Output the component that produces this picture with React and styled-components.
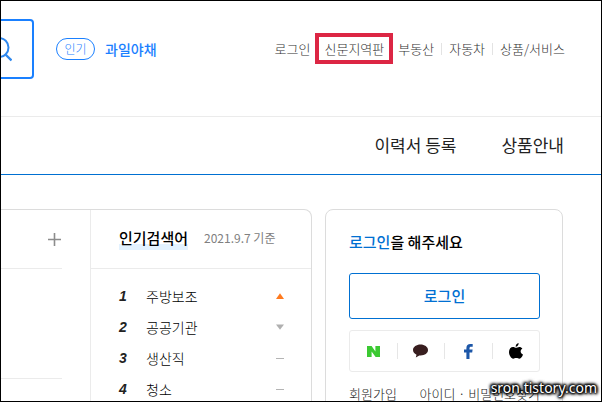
import React from "react";
import styled, { createGlobalStyle } from "styled-components";

const keywords = [
  { name: "주방보조", trend: "up" },
  { name: "공공기관", trend: "down" },
  { name: "생산직", trend: "same" },
  { name: "청소", trend: "same" },
];

const trendLabel = { up: "상승", down: "하락", same: "변동 없음" };

function Trend({ type }) {
  return (
    <svg width="8" height="6" viewBox="0 0 8 6" role="img" aria-label={trendLabel[type]}>
      {type === "up" && <path d="M4 0.3 L8 6 H0 Z" fill="#ff7a1f" />}
      {type === "down" && <path d="M0 0.5 H8 L4 5.8 Z" fill="#b0b0b0" />}
      {type === "same" && <path d="M0 3 H8 V4 H0 Z" fill="#b4b4b4" />}
    </svg>
  );
}

export default function App() {
  return (
    <Page>
      <GlobalStyle />
      <Header>
        <SearchButton type="button" aria-label="검색">
          <svg width="26" height="26" viewBox="0 0 26 26" fill="none" stroke="#2f88ee" strokeWidth="2">
            <circle cx="13" cy="11.5" r="9.5" />
            <path d="M19.5 18.5 L25.5 24.5" strokeWidth="2.4" />
          </svg>
        </SearchButton>
        <Badge>인기</Badge>
        <HotKeyword href="#hot">과일야채</HotKeyword>
        <UtilMenu>
          <UtilLink href="#login">로그인</UtilLink>
          <Marked>
            <UtilLink href="#local">신문지역판</UtilLink>
          </Marked>
          <UtilLink href="#estate">부동산</UtilLink>
          <Bar />
          <UtilLink href="#car">자동차</UtilLink>
          <Bar />
          <UtilLink href="#goods">상품/서비스</UtilLink>
        </UtilMenu>
      </Header>
      <MainMenu>
        <MenuLink href="#resume">이력서 등록</MenuLink>
        <MenuLink href="#guide">상품안내</MenuLink>
      </MainMenu>
      <Content>
        <Board>
          <Categories>
            <CategoryRow $tall={false}>
              <MoreButton type="button" aria-label="더보기">
                <svg width="15" height="15" viewBox="0 0 15 15" fill="none" stroke="#8c8c8c" strokeWidth="1.6">
                  <path d="M7.5 1 V14 M1 7.5 H14" />
                </svg>
              </MoreButton>
            </CategoryRow>
            <CategoryRow $tall />
          </Categories>
          <Popular>
            <PopularHead>
              <PopularTitle>인기검색어</PopularTitle>
              <PopularDate>2021.9.7 기준</PopularDate>
            </PopularHead>
            <Ranking>
              {keywords.map((keyword, index) => (
                <RankItem key={keyword.name}>
                  <Rank>{index + 1}</Rank>
                  <RankName>{keyword.name}</RankName>
                  <Trend type={keyword.trend} />
                </RankItem>
              ))}
            </Ranking>
          </Popular>
        </Board>
        <LoginCard>
          <LoginTitle>
            <em>로그인</em>을 해주세요
          </LoginTitle>
          <LoginButton type="button">로그인</LoginButton>
          <SocialList>
            <SocialButton type="button" aria-label="네이버">
              <svg width="13" height="11" viewBox="0 0 13 11" fill="#3bc932">
                <path d="M0 0 H4.6 L8.4 5.4 V0 H13 V11 H8.6 L4.6 5.6 V11 H0 Z" />
              </svg>
            </SocialButton>
            <SocialButton type="button" aria-label="카카오">
              <svg width="15" height="14" viewBox="0 0 15 14" fill="#381e1f">
                <path d="M7.5 0.5 C3.4 0.5 0 2.9 0 6 C0 8 1.4 9.7 3.5 10.7 L2.8 13.6 L6.3 11.4 C11.3 11.9 15 9.4 15 6 C15 2.9 11.6 0.5 7.5 0.5 Z" />
              </svg>
            </SocialButton>
            <SocialButton type="button" aria-label="페이스북">
              <svg width="9" height="15" viewBox="0 0 9 15" fill="#1d57a8">
                <path d="M2.4 15 V8.4 H0 V5.6 H2.4 V4 C2.4 1.4 3.9 0 6.3 0 C7.5 0 8.5 0.1 8.7 0.1 V2.7 H7.1 C5.9 2.7 5.5 3.3 5.5 4.2 V5.6 H8.6 L8.2 8.4 H5.5 V15 Z" />
              </svg>
            </SocialButton>
            <SocialButton type="button" aria-label="애플">
              <svg width="14" height="16" viewBox="0 0 14 16" fill="#000">
                <path d="M9.6 0 C9.8 1.9 8.4 3.7 6.6 3.7 C6.5 1.9 8 0.3 9.6 0 Z" />
                <path d="M7 4.8 C7.8 4.8 8.8 3.9 10.3 3.9 C11.5 3.9 12.7 4.5 13.4 5.5 C10.8 7 11.2 10.5 14 11.5 C13.4 13.2 12 15.8 10.4 15.8 C9.2 15.8 8.8 15.1 7.3 15.1 C5.8 15.1 5.3 15.8 4.2 15.8 C2.3 15.8 0 12.3 0 9.1 C0 5.9 1.9 4 4 4 C5.3 4 6.4 4.8 7 4.8 Z" />
              </svg>
            </SocialButton>
          </SocialList>
          <LoginLinks>
            <a href="#join">회원가입</a>
            <a href="#find">아이디 · 비밀번호찾기</a>
          </LoginLinks>
        </LoginCard>
      </Content>
      <Watermark>sron.tistory.com</Watermark>
    </Page>
  );
}

const GlobalStyle = createGlobalStyle`
  * {
    box-sizing: border-box;
  }
  body {
    margin: 0;
    background: #fff;
    color: #222;
    font-family: "Noto Sans CJK KR", sans-serif;
    font-size: 14px;
  }
  a {
    color: inherit;
    text-decoration: none;
  }
  button {
    padding: 0;
    background: none;
    border: 0;
    font-family: inherit;
    cursor: pointer;
  }
  svg {
    flex-shrink: 0;
  }
`;

const Page = styled.div`
  position: relative;
  height: 100vh;
  overflow: hidden;
  border: 1px solid #000;
`;

const Header = styled.header`
  display: flex;
  align-items: center;
  height: 116px;
  padding: 0 36px 20px 0;
  border-bottom: 1px solid #ebebeb;
`;

const SearchButton = styled.button`
  display: flex;
  align-items: center;
  justify-content: flex-end;
  width: 33px;
  height: 60px;
  padding-right: 20px;
  border: 2px solid #1a80ff;
  border-left: 0;
  border-radius: 0 4px 4px 0;
`;

const Badge = styled.span`
  width: 39px;
  height: 22px;
  margin: 0 10px 0 22px;
  border: 1px solid #1a80ff;
  border-radius: 11px;
  color: #1a80ff;
  font-size: 12px;
  font-weight: 300;
  line-height: 19px;
  text-align: center;
`;

const HotKeyword = styled.a`
  color: #1a80ff;
  font-size: 14px;
  font-weight: 500;
  line-height: 20px;
`;

const UtilMenu = styled.nav`
  display: flex;
  align-items: center;
  margin-left: auto;
  color: #333;
`;

const UtilLink = styled.a`
  font-size: 13px;
  font-weight: 300;
  line-height: 20px;
  white-space: nowrap;
`;

const Marked = styled.span`
  display: flex;
  align-items: center;
  height: 31px;
  margin: 0 5px;
  padding: 0 5px;
  border: 4px solid #dc2644;
`;

const Bar = styled.span`
  width: 1px;
  height: 12px;
  margin: 0 7px;
  background: #e3e3e3;
`;

const MainMenu = styled.nav`
  display: flex;
  align-items: center;
  justify-content: flex-end;
  gap: 45px;
  height: 58px;
  padding: 0 37px 2px 0;
  border-bottom: 1px solid #0070d2;
`;

const MenuLink = styled.a`
  font-size: 17px;
  font-weight: 400;
  line-height: 24px;
`;

const Content = styled.main`
  display: flex;
  gap: 13px;
  padding: 34px 38px 0 0;
`;

const Board = styled.section`
  flex: 1;
  display: grid;
  grid-template-columns: 89px 1fr;
  height: 240px;
  border: 1px solid #dcdcdc;
  border-left: 0;
  border-radius: 0 8px 0 0;
`;

const Categories = styled.div`
  padding-right: 28px;
`;

const CategoryRow = styled.div`
  display: flex;
  align-items: center;
  justify-content: flex-end;
  height: ${({ $tall }) => ($tall ? "110px" : "59px")};
  border-bottom: 1px solid #ebebeb;
`;

const MoreButton = styled.button`
  display: flex;
`;

const Popular = styled.div`
  border-left: 1px solid #ebebeb;
`;

const PopularHead = styled.div`
  display: flex;
  align-items: center;
  gap: 16px;
  height: 59px;
  padding: 0 0 2px 28px;
  border-bottom: 1px solid #ebebeb;
`;

const PopularTitle = styled.h2`
  margin: 0;
  background: linear-gradient(transparent 18px, #e3f2ff 18px);
  color: #000;
  font-size: 15px;
  font-weight: 500;
  line-height: 24px;
`;

const PopularDate = styled.span`
  color: #808080;
  font-size: 12px;
  line-height: 20px;
`;

const Ranking = styled.ol`
  margin: 0;
  padding: 11px 27px 0 28px;
  list-style: none;
`;

const RankItem = styled.li`
  display: flex;
  align-items: center;
  height: 31px;
`;

const Rank = styled.span`
  width: 27px;
  font-family: "Liberation Sans", sans-serif;
  font-size: 14px;
  font-style: italic;
  font-weight: 700;
`;

const RankName = styled.span`
  flex: 1;
  color: #000;
  font-weight: 300;
  line-height: 20px;
`;

const LoginCard = styled.section`
  width: 238px;
  height: 240px;
  padding: 20px 22px 0 23px;
  border: 1px solid #dcdcdc;
  border-radius: 8px 8px 0 0;
`;

const LoginTitle = styled.h2`
  margin: 0 0 19px;
  color: #000;
  font-size: 15px;
  font-weight: 500;
  line-height: 24px;

  em {
    color: #0070d2;
    font-style: normal;
  }
`;

const LoginButton = styled.button`
  width: 100%;
  height: 46px;
  padding-bottom: 2px;
  border: 1px solid #0070d2;
  border-radius: 3px;
  color: #0070d2;
  font-size: 15px;
  font-weight: 500;
`;

const SocialList = styled.div`
  display: flex;
  align-items: center;
  height: 42px;
  margin-top: 11px;
  border: 1px solid #ebebeb;
  border-radius: 3px;
`;

const SocialButton = styled.button`
  flex: 1;
  display: flex;
  align-items: center;
  justify-content: center;
  height: 16px;

  & + & {
    border-left: 1px solid #e6e6e6;
  }
`;

const LoginLinks = styled.div`
  display: flex;
  justify-content: space-between;
  margin-top: 12px;
  color: #222;
  font-size: 13px;
  font-weight: 300;
  line-height: 20px;
  white-space: nowrap;
`;

const Watermark = styled.div`
  position: absolute;
  right: 4px;
  bottom: 4px;
  color: #fff;
  font-family: "Noto Sans", sans-serif;
  font-size: 14px;
  line-height: 18px;
  text-shadow: 0 0 2px #000, 0 0 2px #000, 0 0 3px #000, 0 0 3px #000,
    1px 1px 3px #000, -1px -1px 3px #000, 0 0 4px #000, 0 0 4px #000;
`;
